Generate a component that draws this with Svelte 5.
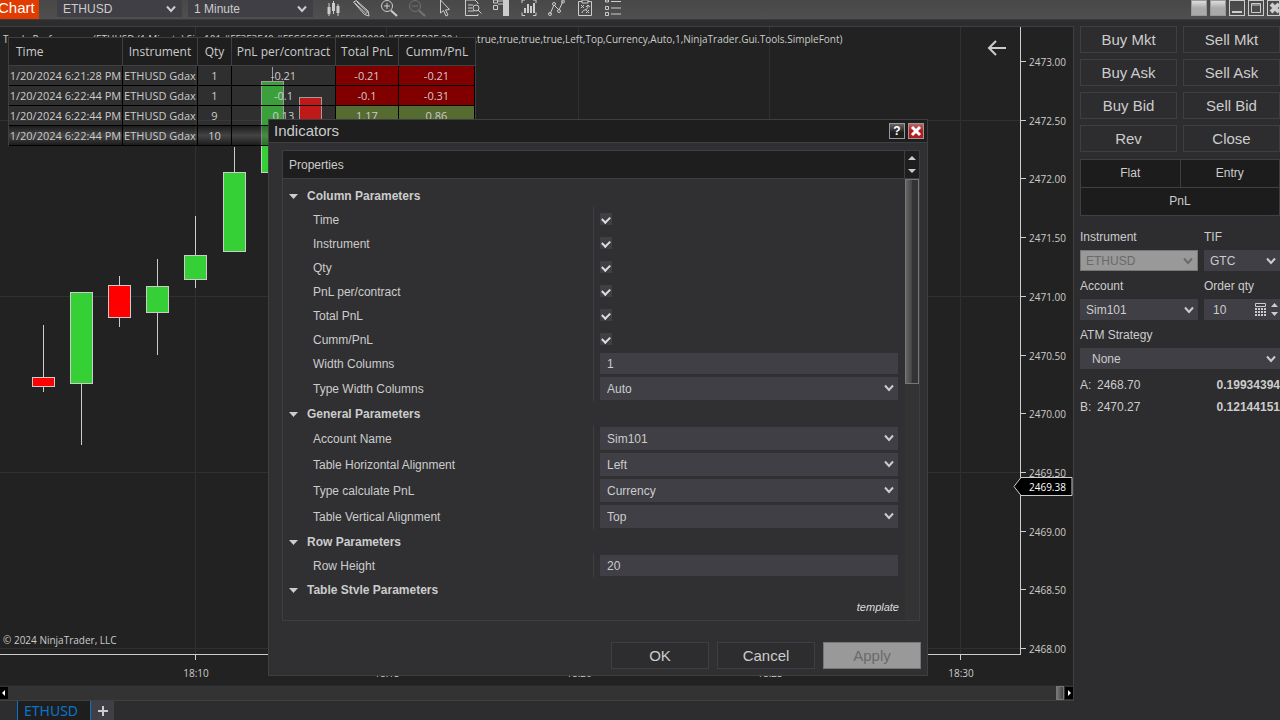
<script lang="ts">
  type Field = {
    label: string;
    kind: "check" | "text" | "select";
    value: string | boolean;
  };
  type Group = { title: string; open: boolean; fields: Field[] };

  let groups: Group[] = $state([
    {
      title: "Column Parameters",
      open: true,
      fields: [
        { label: "Time", kind: "check", value: true },
        { label: "Instrument", kind: "check", value: true },
        { label: "Qty", kind: "check", value: true },
        { label: "PnL per/contract", kind: "check", value: true },
        { label: "Total PnL", kind: "check", value: true },
        { label: "Cumm/PnL", kind: "check", value: true },
        { label: "Width Columns", kind: "text", value: "1" },
        { label: "Type Width Columns", kind: "select", value: "Auto" },
      ],
    },
    {
      title: "General Parameters",
      open: true,
      fields: [
        { label: "Account Name", kind: "select", value: "Sim101" },
        { label: "Table Horizontal Alignment", kind: "select", value: "Left" },
        { label: "Type calculate PnL", kind: "select", value: "Currency" },
        { label: "Table Vertical Alignment", kind: "select", value: "Top" },
      ],
    },
    {
      title: "Row Parameters",
      open: true,
      fields: [{ label: "Row Height", kind: "text", value: "20" }],
    },
    { title: "Table Style Parameters", open: true, fields: [] },
  ]);

  let quantity = $state("10");
  let dialogOpen = $state(true);

  const trades = [
    { time: "1/20/2024 6:21:28 PM", qty: 1, pnl: "-0.21", total: -0.21, cumm: -0.21 },
    { time: "1/20/2024 6:22:44 PM", qty: 1, pnl: "-0.1", total: -0.1, cumm: -0.31 },
    { time: "1/20/2024 6:22:44 PM", qty: 9, pnl: "0.13", total: 1.17, cumm: 0.86 },
    { time: "1/20/2024 6:22:44 PM", qty: 10, pnl: "", total: null, cumm: null },
  ];

  // plot coordinates: x centre, wick top, body top, body bottom, wick bottom
  const candles = [
    { x: 43, high: 298, top: 350, bottom: 359, low: 365, up: false },
    { x: 81, high: 265, top: 265, bottom: 356, low: 418, up: true },
    { x: 119, high: 249, top: 258, bottom: 290, low: 300, up: false },
    { x: 157, high: 232, top: 259, bottom: 285, low: 328, up: true },
    { x: 195, high: 189, top: 228, bottom: 252, low: 261, up: true },
    { x: 234, high: 120, top: 145, bottom: 224, low: 224, up: true },
    { x: 272, high: 40, top: 54, bottom: 145, low: 145, up: true },
    { x: 310, high: 70, top: 70, bottom: 120, low: 120, up: false },
  ];

  const prices = Array.from({ length: 11 }, (_, i) => ({
    label: (2473 - i * 0.5).toFixed(2),
    y: Math.round(34 + i * 58.7),
  }));
  const times = ["18:10", "18:15", "18:20", "18:25", "18:30"].map((label, i) => ({
    label,
    x: Math.round(195 + i * 191.3),
  }));

  const orders = ["Buy Mkt", "Sell Mkt", "Buy Ask", "Sell Ask", "Buy Bid", "Sell Bid", "Rev", "Close"];
  const tools = ["Bars", "Draw", "Zoom in", "Zoom out", "Cursor", "Data box", "Chart trader", "Data series", "Indicators", "Strategies", "Properties"];
</script>

{#snippet dropdown(id: string, value: string, disabled: boolean, label: string)}
  <span class="select" class:disabled>
    <select {id} {disabled} aria-label={label || undefined}>
      <option>{value}</option>
    </select>
    <svg width="10" height="8" viewBox="0 0 10 8"><path d="M1 1.5 5 6l4-4.5" /></svg>
  </span>
{/snippet}

{#snippet toolIcon(name: string)}
  <svg width="18" height="18" viewBox="0 0 18 18">
    {#if name === "Bars"}
      <path d="M5 3v13M9.500 1v13M14 4v12" />
      <path class="fill" d="M3.500 7h3v7h-3zM8 3h3v8H8zM12.500 6h3v7h-3z" />
    {:else if name === "Draw"}
      <path d="m1.500 2 3-1.500L16 11l1 5-4.500-1.500zM3 3l10.500 10M4.500 1.500 15.500 12M13 14.500l3-3" />
    {:else if name === "Zoom in" || name === "Zoom out"}
      <g class:faded={name === "Zoom out"}>
        <circle cx="7" cy="6" r="5.500" />
        <path d={name === "Zoom in" ? "M4 6h6M7 3v6" : "M4 6h6"} />
        <path class="thick" d="m11 10.500 6 5.500" />
      </g>
    {:else if name === "Cursor"}
      <path d="M4.500 0v13l3-2.500 2.500 5.500 2-1-2.500-5 4-.5z" />
    {:else if name === "Data box"}
      <path d="M14 4V3l-3-3H1.500v15.500H14V14M4 5h5M4 8h4M4 11h6" />
      <circle cx="12" cy="8" r="3" />
      <path d="m14 10 3.500 3.500" />
    {:else if name === "Chart trader"}
      <path d="M1.500 0h4v3h-4zM1.500 5.500h4v4h-4zM6 1h5M6 4h5" />
      <path class="fill" d="M11 0h6v16h-6z" />
    {:else if name === "Data series"}
      <path d="M5 0H2v3M13 0h3v3M5 15.500H2v-3M13 15.500h3v-3" />
      <path class="thick" d="M5 8v5M8 4v9M11 6v7M14 3v10" />
    {:else if name === "Indicators"}
      <path d="m2 14 4-9 5 5 4-9" />
      <circle cx="2" cy="14" r="1.500" /><circle cx="6" cy="4" r="1.500" />
      <circle cx="11" cy="11" r="1.500" /><circle cx="15" cy="1.500" r="1.500" />
    {:else if name === "Strategies"}
      <path d="M6 1.500H2.500v14h13v-14H12M6 0h6v3H6zM5 5l3 3M8 5 5 8M10 10l3 3M13 10l-3 3M6 13c0-4 6-2 6-7M10 7l2-2 2 2" />
    {:else}
      <path d="M1.500 0h3v2h-3zM1.500 6.500h3v3h-3zM1.500 12.500h3v3h-3zM7 1.500h10M7 8h10M7 14h10" />
    {/if}
  </svg>
{/snippet}

<div class="app">
  <header class="toolbar">
    <span class="tag">Chart</span>
    <div class="series">{@render dropdown("series", "ETHUSD", false, "Series")}</div>
    <div class="series">{@render dropdown("interval", "1 Minute", false, "Interval")}</div>
    <div class="tools">
      {#each tools as tool}
        <button aria-label={tool}>{@render toolIcon(tool)}</button>
      {/each}
    </div>
    <div class="window">
      <button class="blank" aria-label="Link instrument"></button>
      <button class="blank" aria-label="Link interval"></button>
      <button aria-label="Minimize"><svg width="14" height="14"><path class="thick" d="M2 11h10" /></svg></button>
      <button aria-label="Maximize"><svg width="14" height="14"><path d="M2.500 2.500h9v9h-9zM2 4h10" /></svg></button>
      <button aria-label="Close window"><svg width="14" height="14"><path class="cross" d="m3 3 8 8M11 3l-8 8" /></svg></button>
    </div>
  </header>

  <div class="workspace">
    <main>
      <div class="chart">
        <svg class="plot">
          {#each times as t}
            <line class="grid" x1={t.x + 0.5} x2={t.x + 0.5} y1="0" y2="100%" />
          {/each}
          {#each prices as p, i}
            {#if i % 3 === 1}
              <line class="grid" x1="0" x2="100%" y1={p.y + 0.5} y2={p.y + 0.5} />
            {/if}
          {/each}
          {#each candles as c}
            <line class="wick" x1={c.x + 0.5} x2={c.x + 0.5} y1={c.high} y2={c.low} />
            <rect
              class={c.up ? "up" : "down"}
              x={c.x - 10.5}
              y={c.top + 0.5}
              width="22"
              height={c.bottom - c.top}
            />
          {/each}
          <text x="3" y="617">© 2024 NinjaTrader, LLC</text>
        </svg>

        <svg class="prices">
          {#each prices as p}
            <line class="tick" x1="0" x2="5" y1={p.y + 0.5} y2={p.y + 0.5} />
            <text x="8" y={p.y + 5}>{p.label}</text>
          {/each}
          <path class="marker" d="M-7 459.500 0 450.500h51v18H0z" />
          <text class="current" x="8" y="464">2469.38</text>
        </svg>

        <svg class="times">
          {#each times as t}
            <line class="tick" x1={t.x + 0.5} x2={t.x + 0.5} y1="0" y2="5" />
            <text x={t.x + 1} y="22" text-anchor="middle">{t.label}</text>
          {/each}
        </svg>

        <p class="caption">
          Trade Performance(ETHUSD (1 Minute),Sim101,#FF3F3F40,#FFCCCCCC,#FF800000,#FF556B2F,20,true,true,true,true,true,Left,Top,Currency,Auto,1,NinjaTrader.Gui.Tools.SimpleFont)
        </p>

        <button class="back" aria-label="Back">
          <svg width="20" height="16"><path d="M19 8H2M9 1 2 8l7 7" /></svg>
        </button>

        <table class="trades">
          <thead>
            <tr>
              <th class="time">Time</th>
              <th class="instrument">Instrument</th>
              <th class="qty">Qty</th>
              <th class="pnl">PnL per/contract</th>
              <th class="total">Total PnL</th>
              <th class="cumm">Cumm/PnL</th>
            </tr>
          </thead>
          <tbody>
            {#each trades as trade}
              <tr class:selected={trade.total === null}>
                <td class="time">{trade.time}</td>
                <td>ETHUSD Gdax</td>
                <td>{trade.qty}</td>
                <td>{trade.pnl}</td>
                {#each [trade.total, trade.cumm] as amount}
                  <td class:loss={amount !== null && amount < 0} class:gain={amount !== null && amount > 0}>
                    {amount ?? ""}
                  </td>
                {/each}
              </tr>
            {/each}
          </tbody>
        </table>
      </div>

      <div class="scroller">
        <button aria-label="Scroll left"><svg width="8" height="10"><path d="M5 2v6L2 5z" /></svg></button>
        <span class="grip"></span>
        <button aria-label="Scroll right"><svg width="8" height="10"><path d="M3 2v6l3-3z" /></svg></button>
      </div>
    </main>

    <aside>
      <div class="orders">
        {#each orders as order}
          <button>{order}</button>
        {/each}
      </div>

      <div class="position">
        <span>Flat</span>
        <span>Entry</span>
        <span class="wide">PnL</span>
      </div>

      <div class="ticket">
        <label for="instrument">Instrument</label>
        <label for="tif">TIF</label>
        {@render dropdown("instrument", "ETHUSD", true, "")}
        {@render dropdown("tif", "GTC", false, "")}
        <label for="account">Account</label>
        <label for="quantity">Order qty</label>
        {@render dropdown("account", "Sim101", false, "")}
        <span class="quantity">
          <input id="quantity" bind:value={quantity} />
          <svg width="26" height="15">
            <path d="M1.500 1.500h10v3h-10z" />
            <path class="keys" d="M1 7h11M1 10h11M1 13h11" />
            <path class="fill" d="M17 5h7l-3.500-4zM17 10h7l-3.500 4z" />
          </svg>
        </span>
        <label class="wide" for="strategy">ATM Strategy</label>
        <div class="wide strategy">{@render dropdown("strategy", "None", false, "")}</div>
      </div>

      <dl>
        <div><dt>A:</dt><dd>2468.70</dd><dd class="size">0.19934394</dd></div>
        <div><dt>B:</dt><dd>2470.27</dd><dd class="size">0.12144151</dd></div>
      </dl>
    </aside>
  </div>

  <footer>
    <button class="tab">ETHUSD</button>
    <button class="add" aria-label="Add tab"><svg width="12" height="12"><path d="M6 1v10M1 6h10" /></svg></button>
  </footer>

  {#if dialogOpen}
    <div class="dialog" role="dialog" aria-labelledby="dialog-title">
      <div class="titlebar">
        <h1 id="dialog-title">Indicators</h1>
        <button class="help">?</button>
        <button class="close" aria-label="Close" onclick={() => (dialogOpen = false)}>
          <svg width="14" height="14"><path d="m3 3 8 8M11 3l-8 8" /></svg>
        </button>
      </div>

      <div class="properties">
        <div class="properties-head">
          <h2>Properties</h2>
          <div class="spin">
            <button aria-label="Scroll up"><svg width="8" height="4"><path d="M0 4h8L4 0z" /></svg></button>
            <button aria-label="Scroll down"><svg width="8" height="4"><path d="M0 0h8L4 4z" /></svg></button>
          </div>
        </div>
        <div class="properties-body">
          <div class="content">
            <div class="list">
              {#each groups as group, g}
                <button class="group" aria-expanded={group.open} onclick={() => (group.open = !group.open)}>
                  <svg width="9" height="5"><path d="M0 0h9L4.500 5z" /></svg>{group.title}
                </button>
                {#if group.open}
                  {#each group.fields as field, f}
                    <div class="field {field.kind}">
                      <label for="field-{g}-{f}">{field.label}</label>
                      <div class="editor">
                        {#if field.kind === "check"}
                          <input id="field-{g}-{f}" type="checkbox" checked={field.value === true} />
                        {:else if field.kind === "text"}
                          <input id="field-{g}-{f}" type="text" value={field.value} />
                        {:else}
                          {@render dropdown(`field-${g}-${f}`, String(field.value), false, "")}
                        {/if}
                      </div>
                    </div>
                  {/each}
                {/if}
              {/each}
            </div>
            <a href="#template">template</a>
          </div>
          <div class="track"><span class="thumb"></span></div>
        </div>
      </div>

      <div class="actions">
        <button>OK</button>
        <button>Cancel</button>
        <button disabled>Apply</button>
      </div>
    </div>
  {/if}
</div>

<style>
  :global(body) {
    background: #2d2d2f;
  }
  .app,
  .app * {
    box-sizing: border-box;
  }
  .app {
    position: relative;
    display: flex;
    flex-direction: column;
    min-height: 100vh;
    overflow: hidden;
    color: #ccc;
    font: 12px/16px "Liberation Sans", Arial, sans-serif;
  }
  button,
  input,
  select {
    margin: 0;
    padding: 0;
    border: 0;
    background: none;
    color: inherit;
    font: inherit;
    border-radius: 0;
  }
  svg {
    display: block;
    flex: none;
    fill: none;
    stroke: #ccc;
  }
  .fill {
    fill: #ccc;
    stroke: none;
  }
  .thick {
    stroke-width: 2;
  }
  .faded {
    opacity: 0.3;
  }

  .select {
    display: grid;
    grid-template-columns: minmax(0, 1fr);
    align-items: center;
    height: 21px;
    background: #3f3f45;
  }
  .select select {
    grid-area: 1 / 1;
    width: 100%;
    height: 100%;
    padding-left: 6px;
    appearance: none;
    outline: none;
  }
  .select svg {
    grid-area: 1 / 1;
    justify-self: end;
    margin-right: 4px;
    stroke-width: 2;
    pointer-events: none;
  }
  .select.disabled {
    background: #999;
    border: 1px solid #777;
    color: #6a6a6a;
  }
  .select.disabled select {
    opacity: 1;
    padding-left: 5px;
  }
  .select.disabled svg {
    stroke: #6a6a6a;
  }

  /* toolbar */
  .toolbar {
    display: flex;
    align-items: flex-start;
    height: 20px;
    background: linear-gradient(#484848, #4f4f4f);
    border-bottom: 1px solid #3a3a3b;
  }
  .tag {
    width: 39px;
    height: 19px;
    margin-right: 18px;
    background: #e03c00;
    color: #fff;
    font-size: 15px;
    text-indent: -2px;
  }
  .series {
    width: 125px;
    height: 17px;
    margin-right: 6px;
  }
  .series .select {
    height: 17px;
  }
  .series svg {
    margin-right: 6px;
  }
  .tools {
    display: flex;
    gap: 10px;
    margin-left: 5px;
  }
  .window {
    display: flex;
    gap: 3px;
    margin-left: auto;
  }
  .window button {
    width: 16px;
    height: 16px;
    border: 1px solid #ccc;
    overflow: hidden;
  }
  .window button:last-child {
    width: 13px;
  }
  .window .blank {
    border-color: #999;
    background: linear-gradient(#ddd, #aaa 50%);
  }
  .cross {
    stroke-width: 4;
  }

  /* chart */
  .workspace {
    display: flex;
    flex: 1;
    padding-top: 6px;
  }
  main {
    display: flex;
    flex: 1;
    flex-direction: column;
    min-width: 0;
    border: 1px solid #3f3f42;
    border-left: 0;
  }
  .chart {
    position: relative;
    display: grid;
    flex: 1;
    grid-template: 1fr 30px / 1fr 52px;
    background: #222;
    overflow: hidden;
  }
  .chart svg {
    width: 100%;
    height: 100%;
  }
  .chart text {
    fill: #ccc;
    stroke: none;
    font: 10px "Open Sans", "Noto Sans", sans-serif;
  }
  .plot {
    border-right: 1px solid #ccc;
    border-bottom: 1px solid #ccc;
  }
  .prices {
    overflow: visible;
  }
  .times {
    grid-column: 1 / -1;
  }
  .grid {
    stroke: #303031;
  }
  .up {
    fill: #35d035;
  }
  .down {
    fill: #f00;
  }
  .marker {
    fill: #000;
  }
  .chart .current {
    fill: #fff;
  }
  .caption {
    position: absolute;
    top: 4px;
    left: 3px;
    margin: 0;
    font: 10px/16px "Open Sans", "Noto Sans", sans-serif;
    white-space: nowrap;
  }
  .back {
    position: absolute;
    top: 13px;
    right: 66px;
  }
  .back svg {
    stroke-width: 2;
  }
  .trades {
    position: absolute;
    top: 10px;
    left: 8px;
    width: 468px;
    table-layout: fixed;
    border: 1px solid #3f3f42;
    border-spacing: 0;
    border-bottom: 0;
    font: 11px/16px "Open Sans", "Noto Sans", sans-serif;
    text-align: center;
    white-space: nowrap;
  }
  .trades th {
    height: 28px;
    padding: 0;
    background: #1e1e1e;
    border-right: 1px solid #3f3f42;
    border-bottom: 1px solid #3f3f42;
    font-weight: normal;
    font-size: 12px;
  }
  .trades th:last-child {
    border-right: 0;
  }
  .trades td {
    height: 20px;
    padding: 0;
    background: rgba(71, 71, 71, 0.35);
    border-right: 1px solid #000;
    border-bottom: 1px solid #000;
  }
  .trades .selected td {
    background: linear-gradient(rgba(24, 24, 24, 0.5), rgba(90, 90, 90, 0.6), rgba(24, 24, 24, 0.5));
  }
  .trades .loss {
    background: #800000;
  }
  .trades .gain {
    background: #556b2f;
  }
  .trades th.time {
    width: 114px;
    padding-left: 7px;
    text-align: left;
  }
  .instrument {
    width: 75px;
  }
  .qty {
    width: 34px;
  }
  .pnl {
    width: 104px;
  }
  .total {
    width: 63px;
  }
  .scroller {
    display: flex;
    align-items: center;
    height: 15px;
    background: #333;
    border-top: 1px solid #2a2a2a;
  }
  .scroller button {
    height: 12px;
    background: #000;
  }
  .scroller svg {
    fill: #fff;
    stroke: none;
  }
  .grip {
    width: 8px;
    height: 14px;
    margin: 0 1px 0 auto;
    background: linear-gradient(90deg, #777, #444);
    border: 1px solid #777;
  }

  /* order entry */
  aside {
    width: 200px;
    margin-left: 6px;
  }
  .orders {
    display: grid;
    grid-template-columns: 1fr 1fr;
    gap: 6px;
  }
  .orders button {
    height: 27px;
    border: 1px solid #3f3f42;
    font-size: 15px;
  }
  .position {
    display: grid;
    grid-template-columns: 1fr 1fr;
    gap: 1px;
    margin: 7px 0 13px;
    padding: 1px;
    background: #3f3f42;
    line-height: 27px;
    text-align: center;
  }
  .position span {
    background: #1c1c1c;
  }
  .wide {
    grid-column: 1 / -1;
  }
  .ticket {
    display: grid;
    grid-template-columns: 118px minmax(0, 1fr);
    column-gap: 6px;
  }
  .ticket label {
    height: 21px;
  }
  .ticket .select {
    margin-bottom: 7px;
  }
  .strategy select {
    padding-left: 12px;
  }
  .quantity {
    display: flex;
    align-items: center;
    height: 21px;
    padding-left: 9px;
    background: #3f3f45;
  }
  .quantity input {
    flex: 1;
    min-width: 0;
  }
  .keys {
    stroke-width: 2;
    stroke-dasharray: 2 1;
  }
  dl {
    margin: 0;
    padding-top: 1px;
  }
  dl div {
    display: flex;
    height: 22px;
  }
  dt {
    width: 17px;
  }
  dd {
    margin: 0;
  }
  .size {
    margin-left: auto;
    font-weight: bold;
  }

  footer {
    display: flex;
    height: 19px;
    padding-left: 17px;
  }
  .tab {
    width: 74px;
    padding-right: 6px;
    background: #1e1e1e;
    border: 1px solid #0a74c8;
    border-width: 0 1px;
    color: #0a74c8;
    font: 14px/19px "Noto Sans", sans-serif;
  }
  .add {
    display: grid;
    place-items: center;
    width: 23px;
    background: #3f3f45;
  }
  .add svg {
    stroke-width: 2;
  }

  /* indicator dialog */
  .dialog {
    position: absolute;
    top: 119px;
    left: 268px;
    width: 660px;
    background: #303032;
    border: 1px solid #3f3f42;
  }
  .titlebar {
    display: flex;
    align-items: center;
    gap: 3px;
    height: 23px;
    padding: 0 3px 0 5px;
    background: #1e1e1e;
    border-bottom: 1px solid #3f3f42;
  }
  h1,
  h2 {
    flex: 1;
    margin: 0;
    font-weight: normal;
    font-size: 15px;
  }
  .titlebar button {
    width: 16px;
    height: 16px;
    border: 1px solid #999;
    background: linear-gradient(#666, #1e1e1e 60%);
    color: #fff;
    font-weight: bold;
    line-height: 14px;
  }
  .titlebar .close {
    background: linear-gradient(#b66, #b01c20 50%);
  }
  .close svg {
    stroke: #fff;
    stroke-width: 3;
  }
  .properties {
    margin: 7px 7px 21px 13px;
    border: 1px solid #3f3f42;
  }
  .properties-head {
    display: flex;
    height: 28px;
    background: #1e1e1e;
    border-bottom: 1px solid #3f3f42;
  }
  h2 {
    padding-left: 6px;
    font-size: 12px;
    line-height: 28px;
  }
  .spin {
    display: flex;
    flex-direction: column;
    width: 15px;
    border-left: 1px solid #3f3f42;
  }
  .spin button {
    display: grid;
    flex: 1;
    place-items: center;
  }
  .spin svg,
  .group svg {
    fill: #ccc;
    stroke: none;
  }
  .properties-body {
    display: flex;
  }
  .content {
    display: flex;
    flex: 1;
    flex-direction: column;
  }
  .list {
    height: 415px;
    padding-top: 4px;
    overflow: hidden;
  }
  .group {
    display: flex;
    align-items: center;
    gap: 9px;
    width: 100%;
    height: 24px;
    padding: 2px 0 0 6px;
    font-weight: bold;
  }
  .field {
    display: flex;
    align-items: center;
    height: 24px;
    padding-right: 7px;
  }
  .field.select {
    display: flex;
    height: 26px;
    background: none;
  }
  .field > label {
    flex: 1;
    padding: 2px 0 0 30px;
  }
  .editor {
    display: flex;
    align-items: center;
    width: 305px;
    height: 100%;
    padding-left: 6px;
    border-left: 1px solid #3f3f42;
  }
  .editor > .select {
    width: 100%;
    height: 23px;
  }
  input[type="text"] {
    width: 100%;
    height: 21px;
    padding: 2px 0 0 7px;
    background: #3f3f45;
  }
  .editor select {
    padding: 2px 0 0 7px;
  }
  input[type="checkbox"] {
    display: grid;
    justify-content: center;
    align-content: start;
    width: 12px;
    height: 12px;
    padding-top: 3px;
    background: #3f3f45;
    appearance: none;
  }
  input[type="checkbox"]:checked::before {
    content: "";
    width: 6px;
    height: 4px;
    border: solid #ddd;
    border-width: 0 0 2px 2px;
    transform: rotate(-45deg);
  }
  .content a {
    align-self: flex-end;
    padding: 5px 6px;
    color: #ddd;
    font-size: 11px;
    font-style: italic;
    text-decoration: none;
  }
  .track {
    width: 14px;
    background: #333;
  }
  .thumb {
    display: block;
    height: 205px;
    background: linear-gradient(90deg, #666, #444 50%, #333 50%);
    border: 1px solid #777;
  }
  .actions {
    display: flex;
    justify-content: flex-end;
    gap: 8px;
    padding: 0 6px 6px;
  }
  .actions button {
    width: 98px;
    height: 27px;
    border: 1px solid #3f3f42;
    background: #2d2d2f;
    font-size: 15px;
  }
  .actions button:disabled {
    background: #999;
    border-color: #777;
    color: #6a6a6a;
  }
</style>
